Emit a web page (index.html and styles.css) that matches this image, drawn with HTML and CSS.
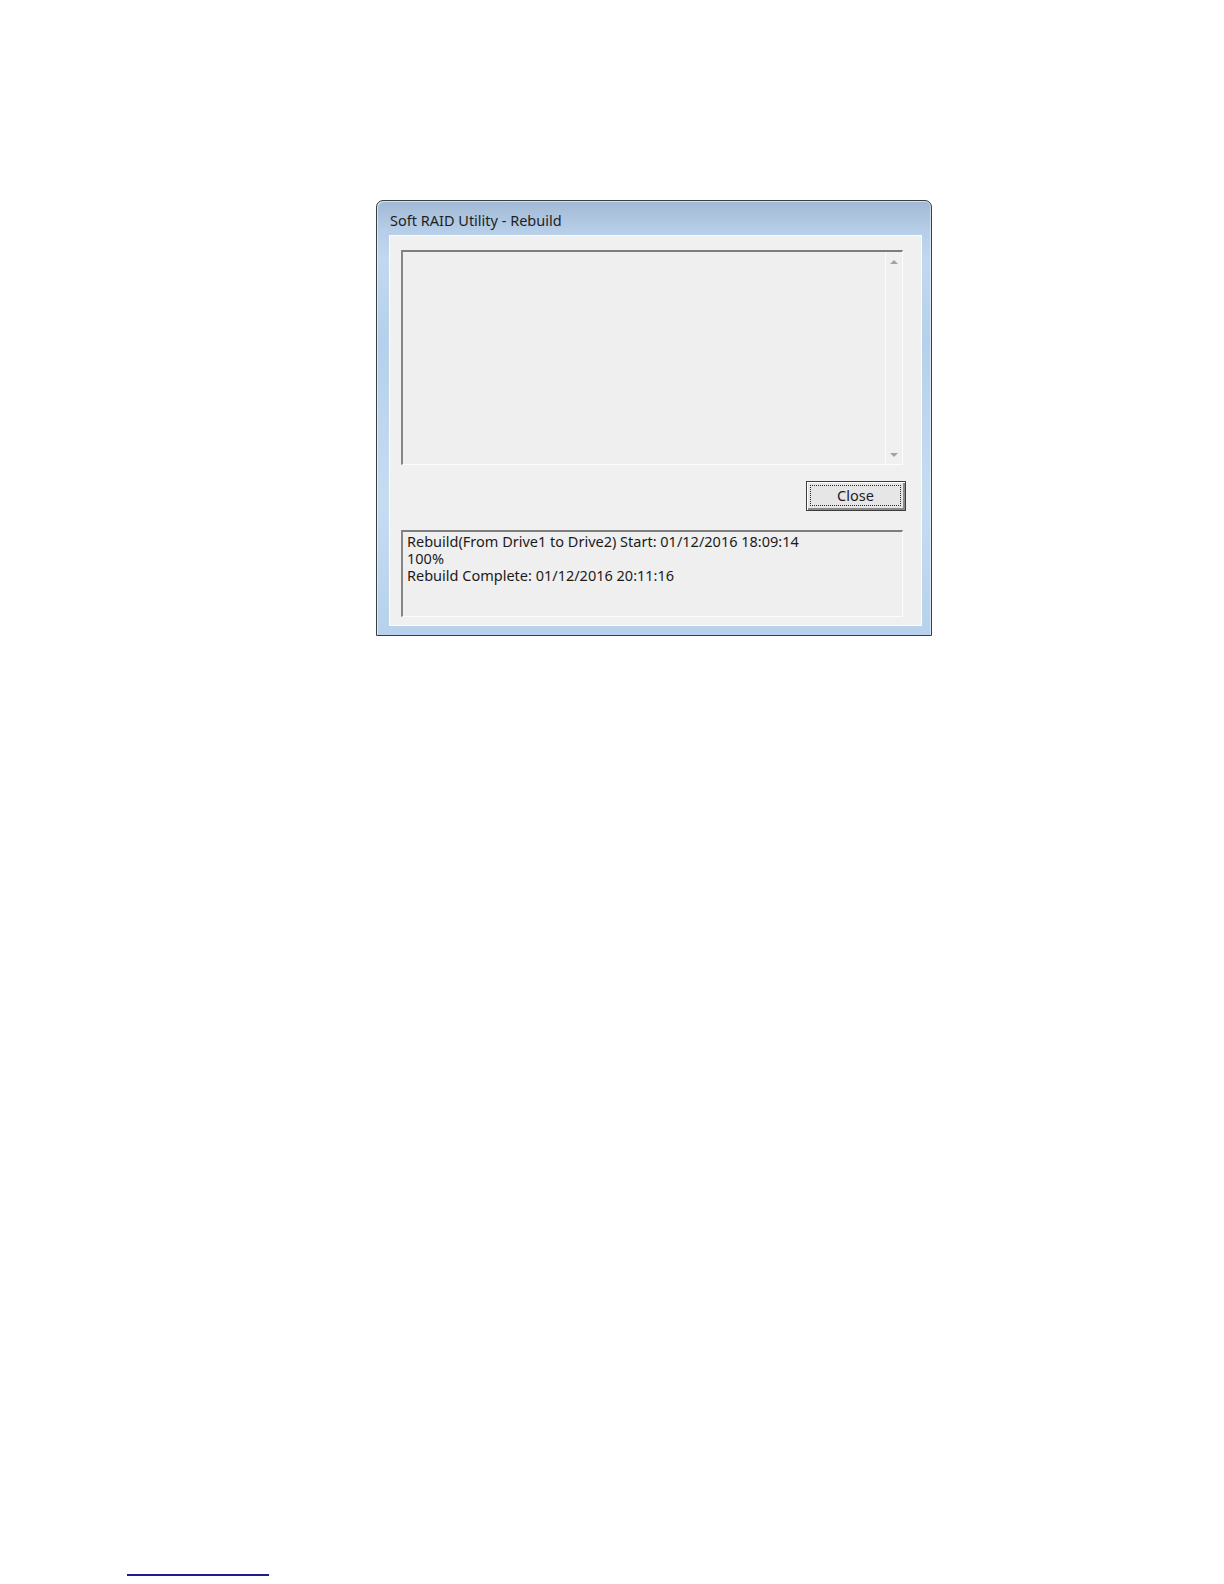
FILE: index.html
```html
<!DOCTYPE html>
<html>
<head>
<meta charset="utf-8">
<title>Soft RAID Utility - Rebuild</title>
<link rel="stylesheet" href="styles.css">
</head>
<body>
<div class="page">
  <div class="window">
    <div class="titlebar">Soft RAID Utility - Rebuild</div>
    <div class="client">
      <div class="logbox logbox-top">
        <div class="logarea"></div>
        <div class="scrollbar">
          <span class="arrow arrow-up"></span>
          <span class="arrow arrow-down"></span>
        </div>
      </div>
      <div class="btnrow">
        <button class="btn"><span class="btn-focus">Close</span></button>
      </div>
      <div class="logbox logbox-bottom">
        <div class="logtext">Rebuild(From Drive1 to Drive2) Start: 01/12/2016 18:09:14<br>100%<br>Rebuild Complete: 01/12/2016 20:11:16</div>
      </div>
    </div>
  </div>
  <div class="footer-line"></div>
</div>
</body>
</html>
```
FILE: styles.css
```css
* { box-sizing: border-box; }
html, body { margin: 0; padding: 0; background: #ffffff; }
body { font-family: "Noto Sans", "Liberation Sans", sans-serif; }

.page {
  width: 1224px;
  height: 1584px;
  padding-top: 200px;
  padding-left: 376px;
}

.window {
  width: 556px;
  height: 436px;
  border: 1px solid #3a3d42;
  border-radius: 7px 7px 0 0;
  background: linear-gradient(to bottom, #a2b9d5 0px, #b6cee8 30px, #c1d8ef 60px, #b6d0eb 140px, #c6dcf1 300px, #b7d1ec 434px);
  padding: 0 9px 9px 12px;
  display: flex;
  flex-direction: column;
  box-shadow: inset 1px 1px 0 rgba(255,255,255,0.55), inset -1px 0 0 rgba(255,255,255,0.45);
}

.titlebar {
  height: 34px;
  flex: none;
  font-size: 14.5px;
  color: #1e1e1e;
  line-height: 34px;
  padding-left: 1px;
  padding-top: 2px;
  white-space: nowrap;
}

.client {
  flex: 1;
  background: #f0f0f0;
  border: 1px solid #fafcfe;
  padding: 14px 0 0 11px;
  display: flex;
  flex-direction: column;
}

.logbox {
  width: 502px;
  background: #efefef;
  border-top: 2px solid #7e7e7e;
  border-left: 2px solid #858585;
  border-right: 1px solid #fdfdfd;
  border-bottom: 1px solid #fdfdfd;
  display: flex;
}

.logbox-top {
  height: 215px;
}

.logarea { flex: 1; }

.scrollbar {
  width: 17px;
  flex: none;
  background: #f0f0f0;
  border-left: 1px solid #fbfbfb;
  display: flex;
  flex-direction: column;
  justify-content: space-between;
  align-items: center;
  padding: 8px 0 7px 0;
}

.arrow {
  width: 0;
  height: 0;
  border-left: 4px solid transparent;
  border-right: 4px solid transparent;
}
.arrow-up { border-bottom: 4px solid #a2a2a2; }
.arrow-down { border-top: 4px solid #a2a2a2; }

.btnrow {
  display: flex;
  justify-content: flex-end;
  padding-right: 15px;
  margin-top: 16px;
}

.btn {
  width: 100px;
  height: 30px;
  margin: 0;
  padding: 2px;
  background: #e6e6e6;
  border: 1px solid #3c3c3c;
  border-radius: 0;
  box-shadow: inset 1px 1px 0 #ffffff, inset -2px -2px 0 #8a8a8a;
  font-family: "Noto Sans", "Liberation Sans", sans-serif;
  font-size: 14.5px;
  color: #1c1c2a;
  display: flex;
}

.btn-focus {
  flex: 1;
  margin: 1px 2px 2px 1px;
  border: 1px dotted #2a2a2a;
  display: flex;
  align-items: center;
  justify-content: center;
  line-height: 1;
  padding-bottom: 1px;
}

.logbox-bottom {
  height: 87px;
  margin-top: 19px;
}

.logtext {
  padding: 1px 0 0 4px;
  font-size: 14.5px;
  line-height: 17px;
  color: #1b1b1b;
  white-space: nowrap;
}

.footer-line {
  width: 142px;
  height: 2px;
  background: #1c1c8e;
  margin-top: 938px;
  margin-left: -249px;
}
```
